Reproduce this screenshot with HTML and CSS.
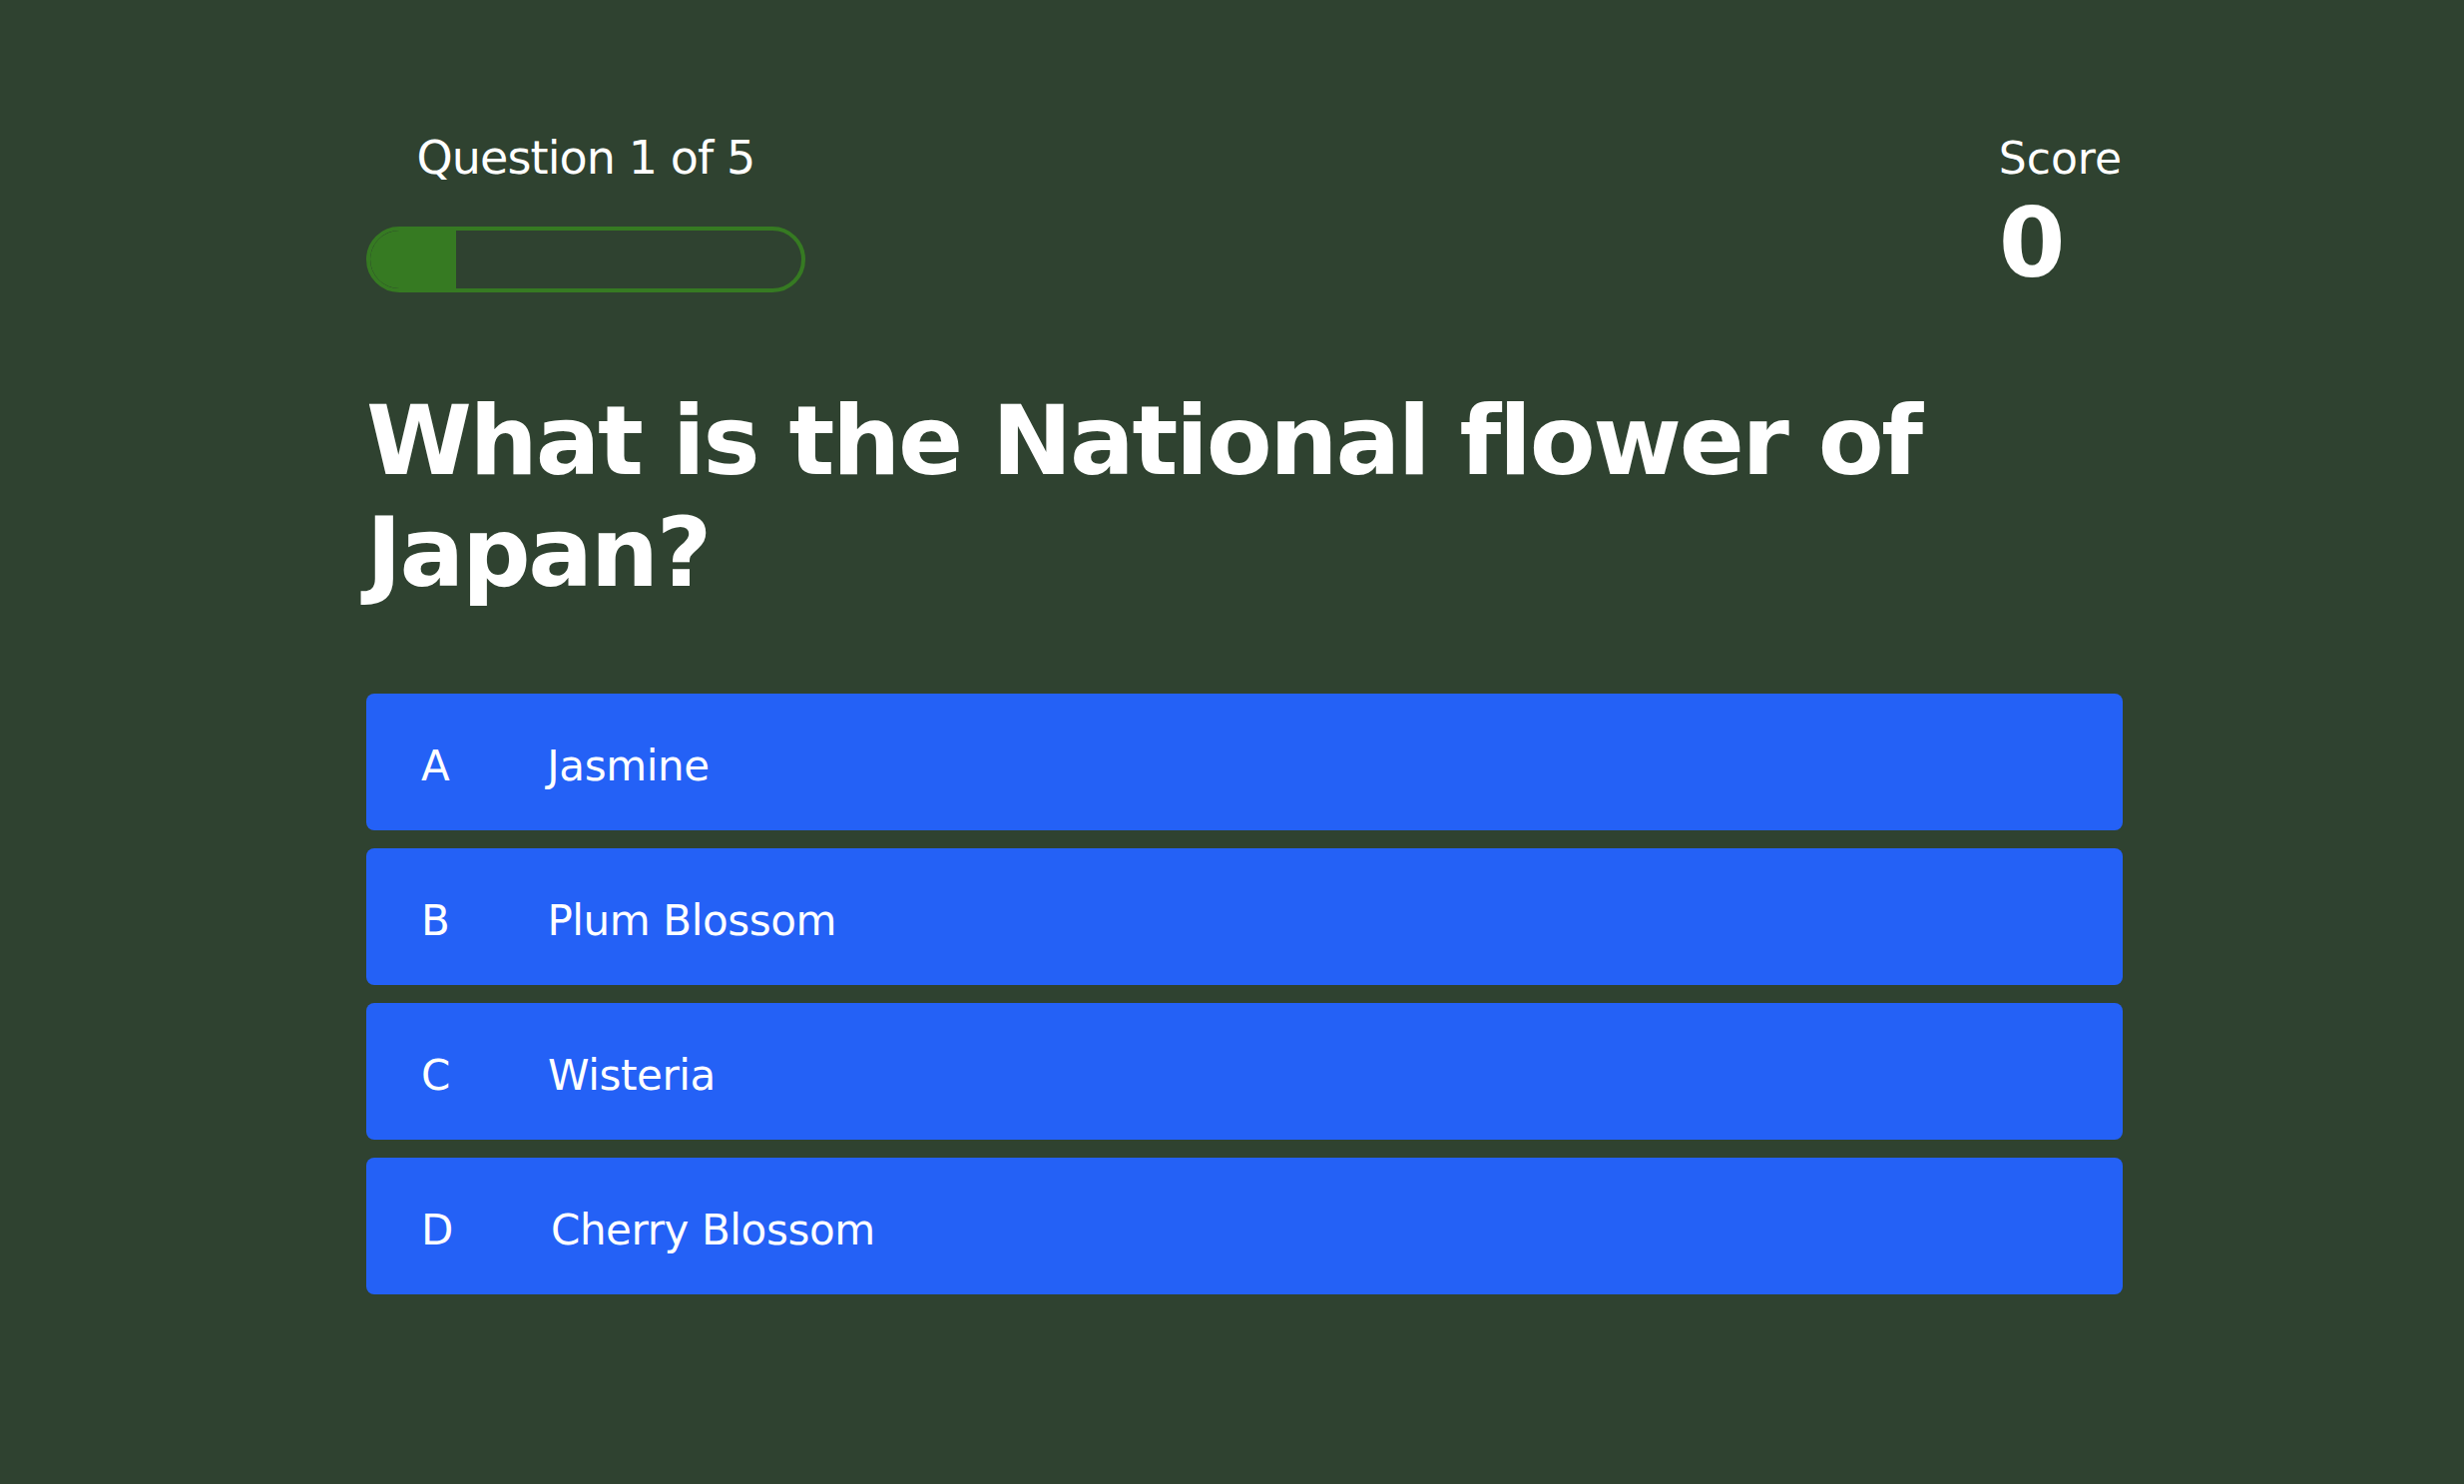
FILE: index.html
```html
<!DOCTYPE html>
<html lang="en">
<head>
<meta charset="utf-8">
<title>Quiz</title>
<link rel="stylesheet" href="styles.css">
</head>
<body>
<main class="quiz">
  <header class="header">
    <div class="progress-col">
      <div class="q-label">Question 1 of 5</div>
      <div class="bar"><div class="bar-fill" style="width:20%"></div></div>
    </div>
    <div class="score">
      <div class="score-label">Score</div>
      <div class="score-value">0</div>
    </div>
  </header>
  <h1 class="question">What is the National flower of Japan?</h1>
  <div class="answers">
    <button class="answer"><span class="letter">A</span><span class="text">Jasmine</span></button>
    <button class="answer"><span class="letter">B</span><span class="text">Plum Blossom</span></button>
    <button class="answer"><span class="letter">C</span><span class="text">Wisteria</span></button>
    <button class="answer"><span class="letter">D</span><span class="text">Cherry Blossom</span></button>
  </div>
</main>
</body>
</html>
```
FILE: styles.css
```css
html, body {
  margin: 0;
  padding: 0;
  background: #2f4230;
  height: 100%;
}
body {
  font-family: "DejaVu Sans", Verdana, sans-serif;
  color: #ffffff;
  font-variant-ligatures: none;
}
.quiz {
  margin-left: 367px;
  width: 1760px;
  padding-top: 131px;
}
.header {
  display: flex;
  justify-content: space-between;
  align-items: flex-start;
}
.progress-col {
  width: 440px;
  text-align: center;
}
.q-label {
  font-size: 46px;
  line-height: 54px;
  letter-spacing: -0.9px;
}
.bar {
  margin-top: 42px;
  height: 66px;
  box-sizing: border-box;
  border: 4px solid #367a22;
  border-radius: 33px;
  overflow: hidden;
}
.bar-fill {
  height: 100%;
  background: #367a22;
  border-radius: 29px 0 0 29px;
}
.score {
  padding-top: 2px;
  margin-right: 1px;
}
.score-label {
  font-size: 44px;
  line-height: 51px;
  letter-spacing: 0;
}
.score-value {
  margin-top: 4px;
  font-size: 96px;
  font-weight: bold;
  line-height: 112px;
}
.question {
  margin: 86px 0 0 0;
  font-size: 96px;
  font-weight: bold;
  line-height: 112px;
  letter-spacing: -2.3px;
  width: 1640px;
}
.answers {
  margin-top: 85px;
  display: flex;
  flex-direction: column;
  gap: 18px;
}
.answer {
  display: flex;
  align-items: center;
  box-sizing: border-box;
  height: 137px;
  padding: 8px 0 0 55px;
  border: none;
  border-radius: 8px;
  background: #2461f6;
  color: #ffffff;
  font-family: "DejaVu Sans", Verdana, sans-serif;
  font-size: 42px;
  letter-spacing: -0.4px;
  text-align: left;
}
.letter {
  margin-right: 98px;
}
```
